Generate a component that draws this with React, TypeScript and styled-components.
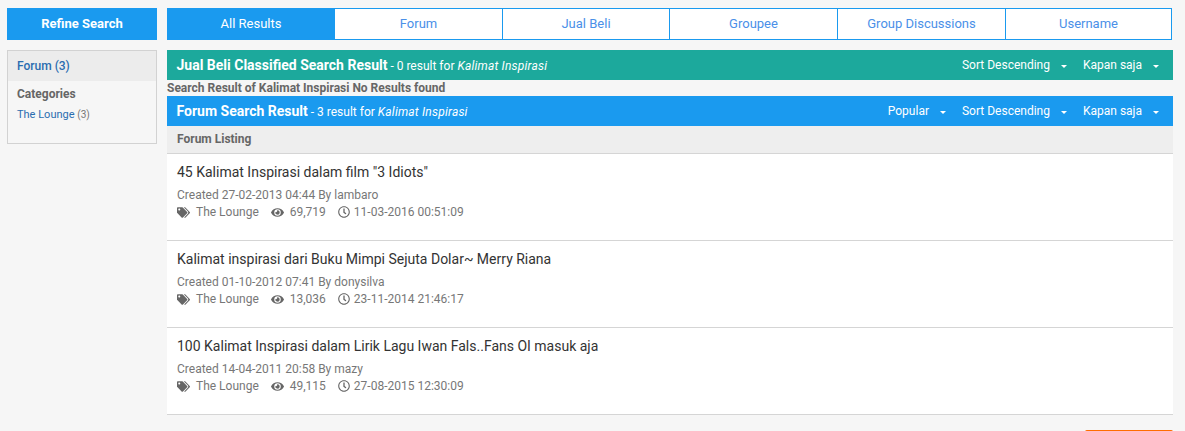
import React from 'react'
import styled, { createGlobalStyle } from 'styled-components'
import { FaTags, FaEye, FaRegClock } from 'react-icons/fa'

const BLUE = '#1a9aef'
const TEAL = '#1ca99c'

const GlobalStyle = createGlobalStyle`
    html, body {
        margin: 0;
        padding: 0;
        height: 431px;
        overflow: hidden;
        background-color: #f6f6f6;
        font-family: Roboto, "Liberation Sans", sans-serif;
    }
    * {
        box-sizing: border-box;
    }
`

const Page = styled.div`
    display: flex;
    gap: 10px;
    height: 431px;
    overflow: hidden;
    padding: 8px 12px 0 7px;
`

const Sidebar = styled.aside`
    width: 150px;
    flex-shrink: 0;
`

const RefineButton = styled.div`
    height: 32px;
    background-color: ${BLUE};
    color: #fff;
    font-size: 13px;
    font-weight: 700;
    line-height: 32px;
    text-align: center;
`

const FilterBox = styled.div`
    margin-top: 10px;
    height: 94px;
    border: 1px solid #d2d2d2;
`

const FilterHead = styled.div`
    height: 30px;
    padding-left: 9px;
    background-color: #ececec;
    color: #2a6db0;
    font-size: 12px;
    font-weight: 500;
    line-height: 31px;
`

const FilterTitle = styled.div`
    margin: 5px 0 0 9px;
    color: #666;
    font-size: 12px;
    font-weight: 700;
    line-height: 16px;
`

const FilterLink = styled.div`
    margin: 6px 0 0 9px;
    color: #2a6db0;
    font-size: 11px;
    line-height: 14px;

    span {
        color: #777;
        font-size: 10px;
    }
`

const Main = styled.main`
    flex: 1;
    min-width: 0;
`

const Tabs = styled.nav`
    display: grid;
    grid-template-columns: 166px 168px 167px 168px 168px 1fr;
    height: 32px;
    width: 1005px;
    border: 1px solid ${BLUE};
    background-color: #fff;
`

const Tab = styled.div<{ $active?: boolean }>`
    border-left: ${({ $active }) => ($active ? 'none' : `1px solid ${BLUE}`)};
    background-color: ${({ $active }) => ($active ? BLUE : '#fff')};
    color: ${({ $active }) => ($active ? '#fff' : '#4a90e8')};
    font-size: 13px;
    line-height: 30px;
    text-align: center;
`

const ResultBar = styled.div<{ $color: string; $top?: number }>`
    display: flex;
    align-items: center;
    justify-content: space-between;
    height: 30px;
    margin-top: ${({ $top }) => $top ?? 0}px;
    padding: 0 14px 0 9.5px;
    background-color: ${({ $color }) => $color};
    color: #fff;
`

const BarTitle = styled.div`
    font-size: 12px;
    white-space: nowrap;

    strong {
        font-size: 14px;
        font-weight: 700;
    }

    em {
        font-style: italic;
        letter-spacing: 0.2px;
    }
`

const BarMenus = styled.div`
    display: flex;
    gap: 16px;
`

const BarMenu = styled.div`
    display: flex;
    align-items: center;
    gap: 11px;
    font-size: 12px;
    white-space: nowrap;

    &::after {
        content: '';
        margin-top: 2px;
        border-top: 3px solid #fff;
        border-left: 3px solid transparent;
        border-right: 3px solid transparent;
    }
`

const NoResults = styled.div`
    height: 16px;
    color: #666;
    font-size: 12px;
    font-weight: 700;
    line-height: 17px;
`

const ListingHead = styled.div`
    height: 28px;
    padding-left: 10px;
    background-color: #eee;
    border-bottom: 1px solid #d5d5d5;
    color: #666;
    font-size: 12px;
    font-weight: 700;
    line-height: 27px;
`

const Thread = styled.article`
    height: 87px;
    padding: 9px 10px 0;
    background-color: #fff;
    border-bottom: 1px solid #d5d5d5;
`

const ThreadTitle = styled.div`
    color: #333;
    font-size: 14px;
    line-height: 18px;
`

const ThreadCreated = styled.div`
    margin-top: 6px;
    color: #777;
    font-size: 12px;
    line-height: 16px;
`

const ThreadMeta = styled.div`
    display: flex;
    align-items: center;
    gap: 12px;
    margin-top: 1px;
    color: #777;
    font-size: 12px;
    line-height: 16px;
`

const MetaItem = styled.span<{ $gap: number }>`
    display: flex;
    align-items: center;
    gap: ${({ $gap }) => $gap}px;

    svg {
        color: #666;
    }
`

const Pager = styled.div`
    display: flex;
    justify-content: flex-end;
    margin-top: 15px;
`

const OrangeButton = styled.div`
    width: 88px;
    height: 30px;
    border-radius: 2px;
    background-color: #ff6d00;
`

const threads = [
    { title: '45 Kalimat Inspirasi dalam film "3 Idiots"', created: '27-02-2013 04:44', by: 'lambaro', views: '69,719', last: '11-03-2016 00:51:09' },
    { title: 'Kalimat inspirasi dari Buku Mimpi Sejuta Dolar~ Merry Riana', created: '01-10-2012 07:41', by: 'donysilva', views: '13,036', last: '23-11-2014 21:46:17' },
    { title: '100 Kalimat Inspirasi dalam Lirik Lagu Iwan Fals..Fans OI masuk aja', created: '14-04-2011 20:58', by: 'mazy', views: '49,115', last: '27-08-2015 12:30:09' },
]

const tabs = ['Forum', 'Jual Beli', 'Groupee', 'Group Discussions', 'Username']

const App: React.FC = () => (
    <Page>
        <GlobalStyle />
        <Sidebar>
            <RefineButton>Refine Search</RefineButton>
            <FilterBox>
                <FilterHead>Forum (3)</FilterHead>
                <FilterTitle>Categories</FilterTitle>
                <FilterLink>
                    The Lounge <span>(3)</span>
                </FilterLink>
            </FilterBox>
        </Sidebar>
        <Main>
            <Tabs>
                <Tab $active>All Results</Tab>
                {tabs.map((tab) => (
                    <Tab key={tab}>{tab}</Tab>
                ))}
            </Tabs>
            <ResultBar $color={TEAL} $top={10}>
                <BarTitle>
                    <strong>Jual Beli Classified Search Result</strong> - 0 result for <em>Kalimat Inspirasi</em>
                </BarTitle>
                <BarMenus>
                    <BarMenu>Sort Descending</BarMenu>
                    <BarMenu>Kapan saja</BarMenu>
                </BarMenus>
            </ResultBar>
            <NoResults>Search Result of Kalimat Inspirasi No Results found</NoResults>
            <ResultBar $color={BLUE}>
                <BarTitle>
                    <strong>Forum Search Result</strong> - 3 result for <em>Kalimat Inspirasi</em>
                </BarTitle>
                <BarMenus>
                    <BarMenu>Popular</BarMenu>
                    <BarMenu>Sort Descending</BarMenu>
                    <BarMenu>Kapan saja</BarMenu>
                </BarMenus>
            </ResultBar>
            <ListingHead>Forum Listing</ListingHead>
            {threads.map((thread) => (
                <Thread key={thread.title}>
                    <ThreadTitle>{thread.title}</ThreadTitle>
                    <ThreadCreated>
                        Created {thread.created} By {thread.by}
                    </ThreadCreated>
                    <ThreadMeta>
                        <MetaItem $gap={6}>
                            <FaTags size={13} />
                            The Lounge
                        </MetaItem>
                        <MetaItem $gap={6}>
                            <FaEye size={13} />
                            {thread.views}
                        </MetaItem>
                        <MetaItem $gap={4}>
                            <FaRegClock size={12} />
                            {thread.last}
                        </MetaItem>
                    </ThreadMeta>
                </Thread>
            ))}
            <Pager>
                <OrangeButton />
            </Pager>
        </Main>
    </Page>
)

export default App
